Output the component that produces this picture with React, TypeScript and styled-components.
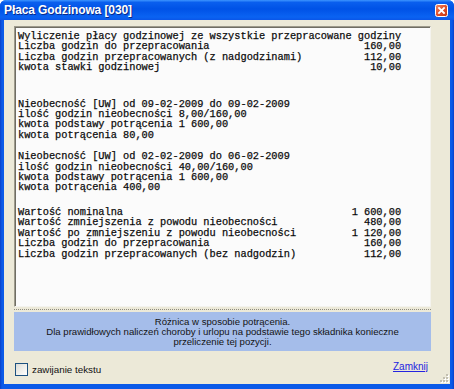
import styled, { createGlobalStyle } from 'styled-components'

const GlobalStyle = createGlobalStyle`
  html, body {
    margin: 0;
    padding: 0;
    background: #ffffff;
  }
`

const Window = styled.div`
  width: 454px;
  height: 389px;
  display: flex;
  flex-direction: column;
  background: linear-gradient(to right, #0a3fc8 0px, #0b5ae8 2px, #0b5ae8 452px, #0a3fc8 454px);
  border-radius: 6px 6px 0 0;
  overflow: hidden;
  box-sizing: border-box;
`

const TitleBar = styled.div`
  height: 20px;
  flex: none;
  display: flex;
  align-items: center;
  justify-content: space-between;
  padding: 0 6px 0 4px;
  background: linear-gradient(to bottom, #3d95ff 0%, #0a5fee 12%, #0052e6 45%, #0a63f2 85%, #0a56e8 100%);
`

const Title = styled.span`
  font-family: 'Liberation Sans', Arial, sans-serif;
  font-weight: bold;
  font-size: 12px;
  color: #ffffff;
  text-shadow: 1px 1px 0 #0a2a8a;
  letter-spacing: -0.1px;
`

const CloseIcon = () => (
  <svg width='13' height='13' viewBox='0 0 13 13'>
    <defs>
      <linearGradient id='cg' x1='0' y1='0' x2='1' y2='1'>
        <stop offset='0' stopColor='#f08a6a' />
        <stop offset='0.5' stopColor='#e0502a' />
        <stop offset='1' stopColor='#c23612' />
      </linearGradient>
    </defs>
    <rect x='0.5' y='0.5' width='12' height='12' rx='2' fill='url(#cg)' stroke='#ffffff' />
    <path d='M4 4 L9 9 M9 4 L4 9' stroke='#ffffff' strokeWidth='1.8' strokeLinecap='square' />
  </svg>
)

const Body = styled.div`
  position: relative;
  flex: 1;
  margin: 0 4px 5px 4px;
  display: flex;
  flex-direction: column;
  padding: 6px 19px 0 10px;
  background: #ece9d8;
`

const TextBox = styled.div`
  height: 281px;
  flex: none;
  box-sizing: border-box;
  background: #fbfbfb;
  border-top: 1px solid #9d9a8c;
  border-left: 1px solid #9d9a8c;
  border-right: 1px solid #f4f3ee;
  border-bottom: 1px solid #f4f3ee;
  box-shadow: inset 1px 1px 0 #6f6d63;
  padding: 4px 0 0 3px;
  font-family: 'Liberation Mono', 'Courier New', monospace;
  font-size: 10.3px;
  line-height: 10.4px;
  color: #000000;
  -webkit-text-stroke: 0.25px #222222;
  white-space: pre;
  overflow: hidden;
`

const Group = styled.div<{ $gap: number }>`
  margin-top: ${props => props.$gap}px;
`

const Line = styled.div`
  width: 62ch;
  display: flex;
  justify-content: space-between;
`

const Separator = styled.div`
  margin-top: 2px;
  height: 2px;
  border-top: 1px dotted #8f8c80;
  flex: none;
`

const InfoPanel = styled.div`
  height: 39px;
  flex: none;
  display: flex;
  flex-direction: column;
  justify-content: center;
  background: #a5bdea;
  font-family: 'Liberation Sans', Arial, sans-serif;
  font-size: 9.6px;
  line-height: 10px;
  color: #141414;
  text-align: center;
`

const Footer = styled.div`
  flex: 1;
  display: flex;
  align-items: center;
  justify-content: space-between;
  padding: 0 3px 0 1px;
`

const CheckLabel = styled.label`
  display: flex;
  align-items: center;
  gap: 4px;
  font-family: 'Liberation Sans', Arial, sans-serif;
  font-size: 9.8px;
  color: #111111;
  margin-top: 3px;
`

const CheckBox = styled.span`
  width: 11px;
  height: 11px;
  border: 1px solid #1c5180;
  background: linear-gradient(135deg, #dcdcd7 0%, #f2f2ee 60%, #ffffff 100%);
`

const CloseLink = styled.a`
  font-family: 'Liberation Sans', Arial, sans-serif;
  font-size: 10px;
  color: #2424e0;
  text-decoration: underline;
  margin-top: -2px;
`

const Grip = styled.svg`
  position: absolute;
  right: 1px;
  bottom: 1px;
`

const groups: { gap: number; rows: [string, string?][] }[] = [
  {
    gap: 0,
    rows: [
      ['Wyliczenie płacy godzinowej ze wszystkie przepracowane godziny'],
      ['Liczba godzin do przepracowania', '160,00'],
      ['Liczba godzin przepracowanych (z nadgodzinami)', '112,00'],
      ['kwota stawki godzinowej', '10,00'],
    ],
  },
  {
    gap: 26,
    rows: [
      ['Nieobecność [UW] od 09-02-2009 do 09-02-2009'],
      ['ilość godzin nieobecności 8,00/160,00'],
      ['kwota podstawy potrącenia 1 600,00'],
      ['kwota potrącenia 80,00'],
    ],
  },
  {
    gap: 11,
    rows: [
      ['Nieobecność [UW] od 02-02-2009 do 06-02-2009'],
      ['ilość godzin nieobecności 40,00/160,00'],
      ['kwota podstawy potrącenia 1 600,00'],
      ['kwota potrącenia 400,00'],
    ],
  },
  {
    gap: 14,
    rows: [
      ['Wartość nominalna', '1 600,00'],
      ['Wartość zmniejszenia z powodu nieobecności', '480,00'],
      ['Wartość po zmniejszeniu z powodu nieobecności', '1 120,00'],
      ['Liczba godzin do przepracowania', '160,00'],
      ['Liczba godzin przepracowanych (bez nadgodzin)', '112,00'],
    ],
  },
]

const App = () => (
  <>
    <GlobalStyle />
    <Window>
      <TitleBar>
        <Title>Płaca Godzinowa [030]</Title>
        <CloseIcon />
      </TitleBar>
      <Body>
        <TextBox>
          {groups.map((g, gi) => (
            <Group key={gi} $gap={g.gap}>
              {g.rows.map(([label, value], ri) => (
                <Line key={ri}>
                  <span>{label}</span>
                  {value && <span>{value}</span>}
                </Line>
              ))}
            </Group>
          ))}
        </TextBox>
        <Separator />
        <InfoPanel>
          <div>Różnica w sposobie potrącenia.</div>
          <div>Dla prawidłowych naliczeń choroby i urlopu na podstawie tego składnika konieczne</div>
          <div>przeliczenie tej pozycji.</div>
        </InfoPanel>
        <Footer>
          <CheckLabel>
            <CheckBox />
            zawijanie tekstu
          </CheckLabel>
          <CloseLink href='#'>Zamknij</CloseLink>
        </Footer>
        <Grip width='11' height='11' viewBox='0 0 11 11'>
          {[[8, 2], [5, 5], [8, 5], [2, 8], [5, 8], [8, 8]].map(([x, y], i) => (
            <g key={i}>
              <rect x={x + 1} y={y + 1} width='2' height='2' fill='#ffffff' />
              <rect x={x} y={y} width='2' height='2' fill='#c2bfb0' />
            </g>
          ))}
        </Grip>
      </Body>
    </Window>
  </>
)

export default App
